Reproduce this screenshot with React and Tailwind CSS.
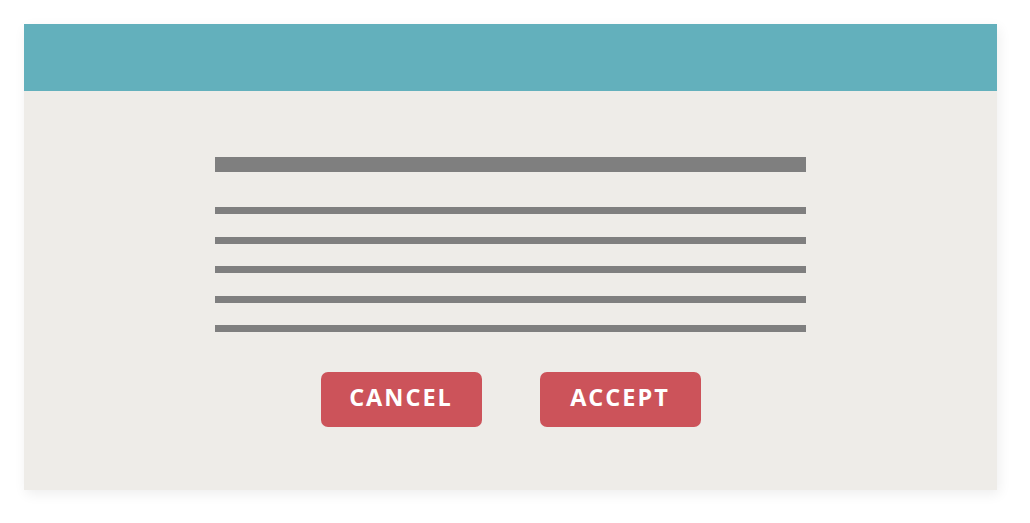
export default function App() {
  const lines = [0, 1, 2, 3, 4]

  return (
    <div className="w-[1030px] h-[523px] bg-white pt-[24px] pl-[24px]">
      <div className="w-[973px] h-[466px] bg-[#eeece8] flex flex-col shadow-[2px_4px_12px_rgba(0,0,0,0.07)]">
        {/* Title bar */}
        <div className="h-[67px] bg-[#63b0bc] shrink-0" />

        {/* Body */}
        <div className="flex flex-col px-[191px] pt-[66px]">
          <div className="h-[15px] bg-[#7f7f7f]" />
          <div className="flex flex-col gap-[22.5px] mt-[35px]">
            {lines.map(i => (
              <div key={i} className="h-[7px] bg-[#7f7f7f]" />
            ))}
          </div>

          <div className="flex justify-center gap-[58px] mt-[39.5px]">
            {['CANCEL', 'ACCEPT'].map(label => (
              <button
                key={label}
                className="w-[161px] h-[55px] rounded-[7px] bg-[#cc535a] text-white font-bold text-[23.5px] tracking-[2px] pb-[3px] font-['Open_Sans',sans-serif]"
              >
                {label}
              </button>
            ))}
          </div>
        </div>
      </div>
    </div>
  )
}
